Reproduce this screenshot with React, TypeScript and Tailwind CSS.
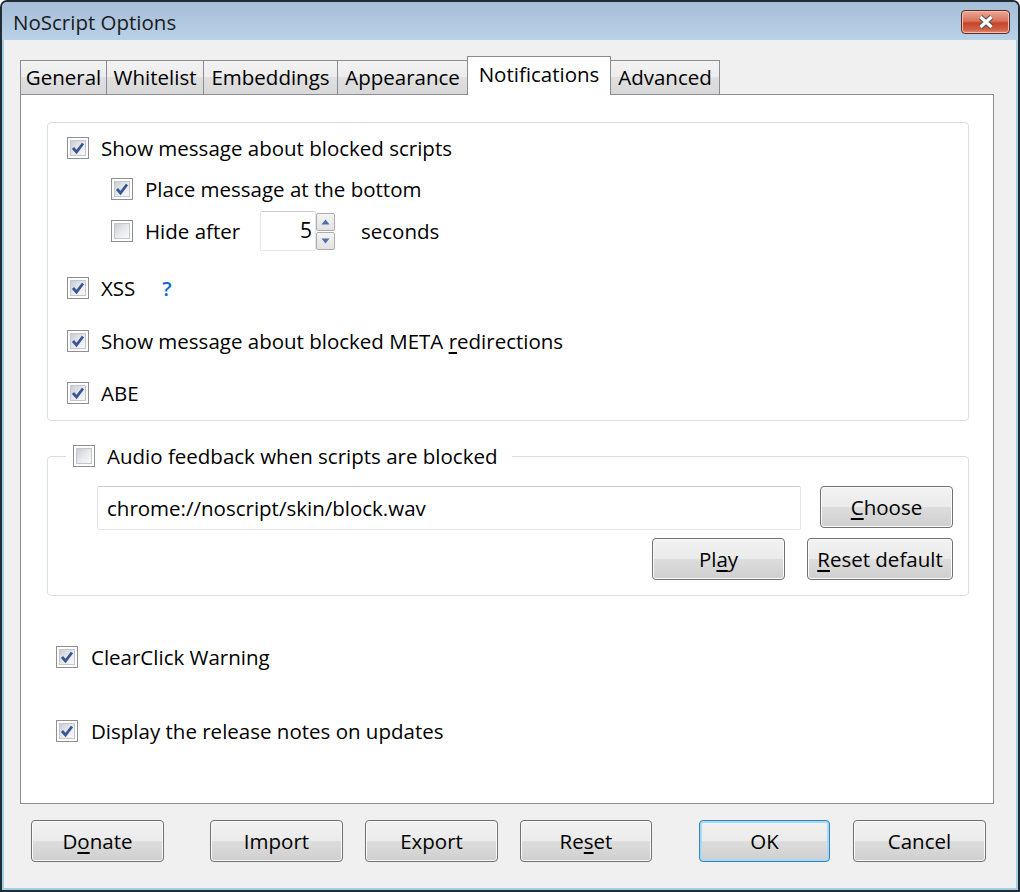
import React from 'react';

const CheckBox: React.FC<{ checked?: boolean }> = ({ checked }) => (
  <span className="flex h-[22px] w-[22px] shrink-0 items-center justify-center border border-[#8e8f8f] bg-white p-[2px]">
    <span className="flex h-full w-full items-center justify-center border border-[#c3c6cb] bg-[linear-gradient(135deg,#c9cdd3,#e9ebee_55%,#f8f8f8)]">
      {checked && (
        <svg width="14" height="14" viewBox="0 0 14 14">
          <path d="M2 7 L5.5 11 L12 2.5" fill="none" stroke="#3a5595" strokeWidth="2.8" />
        </svg>
      )}
    </span>
  </span>
);

const Row: React.FC<{ checked?: boolean; className?: string; children: React.ReactNode }> = ({ checked, className, children }) => (
  <div className={`flex h-[30px] items-center ${className ?? ''}`}>
    <CheckBox checked={checked} />
    {children}
  </div>
);

const Btn: React.FC<{ w: string; def?: boolean; children: React.ReactNode }> = ({ w, def, children }) => (
  <button
    className={`h-[42px] shrink-0 rounded-[4px] border bg-[linear-gradient(#f2f2f2,#ebebeb_50%,#dddddd_50%,#cfcfcf)] text-[20.5px] leading-none text-black ${w} ${
      def ? 'border-[#3c7fb1] shadow-[inset_0_0_0_2px_#a3dcf7]' : 'border-[#707070] shadow-[inset_0_0_0_1px_#fbfbfb]'
    }`}
  >
    {children}
  </button>
);

const Tab: React.FC<{ w: string; active?: boolean; children: React.ReactNode }> = ({ w, active, children }) =>
  active ? (
    <div className={`-ml-px flex h-[39px] items-center justify-center border border-b-0 border-[#898c95] bg-white pb-[3px] text-[20.5px] ${w}`}>
      {children}
    </div>
  ) : (
    <div className={`-ml-px flex h-[35px] items-center justify-center border border-[#898c95] bg-[linear-gradient(#f3f3f3,#ececec_50%,#e0e0e0_50%,#d8d8d8)] text-[20.5px] first:ml-0 ${w}`}>
      {children}
    </div>
  );

const SpinBtn: React.FC<{ up?: boolean }> = ({ up }) => (
  <div className="flex h-[18px] w-[19px] items-center justify-center rounded-[2px] border border-[#acacac] bg-[linear-gradient(#f4f4f4,#e2e2e2)]">
    <svg width="9" height="6" viewBox="0 0 9 6">
      <path d={up ? 'M0.5 5.5 L4.5 0.5 L8.5 5.5 Z' : 'M0.5 0.5 L4.5 5.5 L8.5 0.5 Z'} fill="#4d6ea8" />
    </svg>
  </div>
);

export default function App() {
  return (
    <div className="h-[892px] w-[1020px] overflow-hidden bg-white font-['Open_Sans',sans-serif] text-black">
      <div className="flex h-full flex-col rounded-t-[7px] border-2 border-[#232b33] bg-[#9fcfe6]">
        {/* title bar */}
        <div className="flex h-[38px] shrink-0 items-start justify-between rounded-t-[5px] bg-[linear-gradient(#a6bdd7,#b9d1e9)] pl-[11px] pr-[8px]">
          <span className="mt-[7px] text-[20.5px] leading-[26px] text-[#1a1a1a]">NoScript Options</span>
          <div className="mt-[8px] flex h-[24px] w-[49px] items-center justify-center rounded-[4px] border border-[#5e2a23] bg-[linear-gradient(#eaa996,#d9735b_45%,#c6442a_55%,#d0634a_85%,#e49274)] shadow-[inset_0_0_0_1px_#f1bfae]">
            <svg width="20" height="14" viewBox="0 0 20 14">
              <path d="M4.5 2 L15.5 12 M15.5 2 L4.5 12" stroke="#4e4e4e" strokeWidth="5.2" />
              <path d="M4.5 2 L15.5 12 M15.5 2 L4.5 12" stroke="#ffffff" strokeWidth="3.2" />
            </svg>
          </div>
        </div>

        {/* client */}
        <div className="mx-[2px] mb-[2px] flex flex-1 flex-col bg-[#f0f0f0]">
          <div className="relative z-10 ml-[16px] mt-[16px] flex h-[39px] items-end">
            <Tab w="w-[87px]">General</Tab>
            <Tab w="w-[98px]">Whitelist</Tab>
            <Tab w="w-[135px]">Embeddings</Tab>
            <Tab w="w-[131px]">Appearance</Tab>
            <Tab w="w-[144px]" active>Notifications</Tab>
            <Tab w="w-[110px]">Advanced</Tab>
          </div>

          <div className="-mt-px ml-[16px] flex h-[710px] w-[974px] flex-col border border-[#898c95] bg-white pl-[26px] pr-[24px] pt-[27px] text-[20.5px]">
            {/* group 1 */}
            <div className="flex flex-col rounded-[4px] border border-[#d5dfe5] pb-[12px] pl-[19px] pt-[10px]">
              <Row checked>
                <span className="ml-[12px]">Show message about blocked scripts</span>
              </Row>
              <Row checked className="ml-[44px] mt-[11px]">
                <span className="ml-[12px]">Place message at the bottom</span>
              </Row>
              <div className="ml-[44px] mt-[7px] flex h-[40px] items-center">
                <CheckBox />
                <span className="ml-[12px] w-[115px]">Hide after</span>
                <div className="flex h-[40px] w-[56px] items-center justify-end rounded-[2px] border border-[#e2e6ea] border-t-[#c9cdd2] bg-white pr-[3px] text-[21px]">
                  5
                </div>
                <div className="flex flex-col gap-px">
                  <SpinBtn up />
                  <SpinBtn />
                </div>
                <span className="ml-[26px]">seconds</span>
              </div>
              <Row checked className="mt-[22px]">
                <span className="ml-[12px]">XSS</span>
                <span className="ml-[27px] font-semibold text-[#0a6bd0]">?</span>
              </Row>
              <Row checked className="mt-[23px]">
                <span className="ml-[12px]">
                  Show message about blocked META <u className="underline-offset-[3px]">r</u>edirections
                </span>
              </Row>
              <Row checked className="mt-[22px]">
                <span className="ml-[12px]">ABE</span>
              </Row>
            </div>

            {/* group 2 */}
            <fieldset className="mt-[20px] rounded-[4px] border border-[#d5dfe5]">
              <legend className="ml-[18px] flex h-[30px] items-center px-[7px]">
                <CheckBox />
                <span className="ml-[12px] pr-[8px]">Audio feedback when scripts are blocked</span>
              </legend>
              <div className="flex flex-col pb-[15px] pl-[49px] pr-[15px] pt-[15px]">
                <div className="flex items-start gap-[19px]">
                  <div className="flex h-[44px] flex-1 items-center rounded-[2px] border border-[#e2e6ea] border-t-[#c9cdd2] bg-white pl-[9px]">
                    chrome://noscript/skin/block.wav
                  </div>
                  <Btn w="w-[133px]">
                    <u className="underline-offset-[3px]">C</u>hoose
                  </Btn>
                </div>
                <div className="mt-[8px] flex justify-end gap-[22px]">
                  <Btn w="w-[133px]">
                    Pl<u className="underline-offset-[3px]">a</u>y
                  </Btn>
                  <Btn w="w-[146px]">
                    <u className="underline-offset-[3px]">R</u>eset default
                  </Btn>
                </div>
              </div>
            </fieldset>

            <Row checked className="ml-[9px] mt-[46px]">
              <span className="ml-[13px]">ClearClick Warning</span>
            </Row>
            <Row checked className="ml-[9px] mt-[44px]">
              <span className="ml-[13px]">Display the release notes on updates</span>
            </Row>
          </div>

          {/* bottom buttons */}
          <div className="ml-[27px] mt-[16px] flex">
            <Btn w="w-[133px]">
              D<u className="underline-offset-[3px]">o</u>nate
            </Btn>
            <div className="ml-[46px]">
              <Btn w="w-[133px]">Import</Btn>
            </div>
            <div className="ml-[22px]">
              <Btn w="w-[133px]">Export</Btn>
            </div>
            <div className="ml-[22px]">
              <Btn w="w-[132px]">
                Re<u className="underline-offset-[3px]">s</u>et
              </Btn>
            </div>
            <div className="ml-[47px]">
              <Btn w="w-[131px]" def>
                OK
              </Btn>
            </div>
            <div className="ml-[23px]">
              <Btn w="w-[133px]">Cancel</Btn>
            </div>
          </div>
        </div>
      </div>
    </div>
  );
}
